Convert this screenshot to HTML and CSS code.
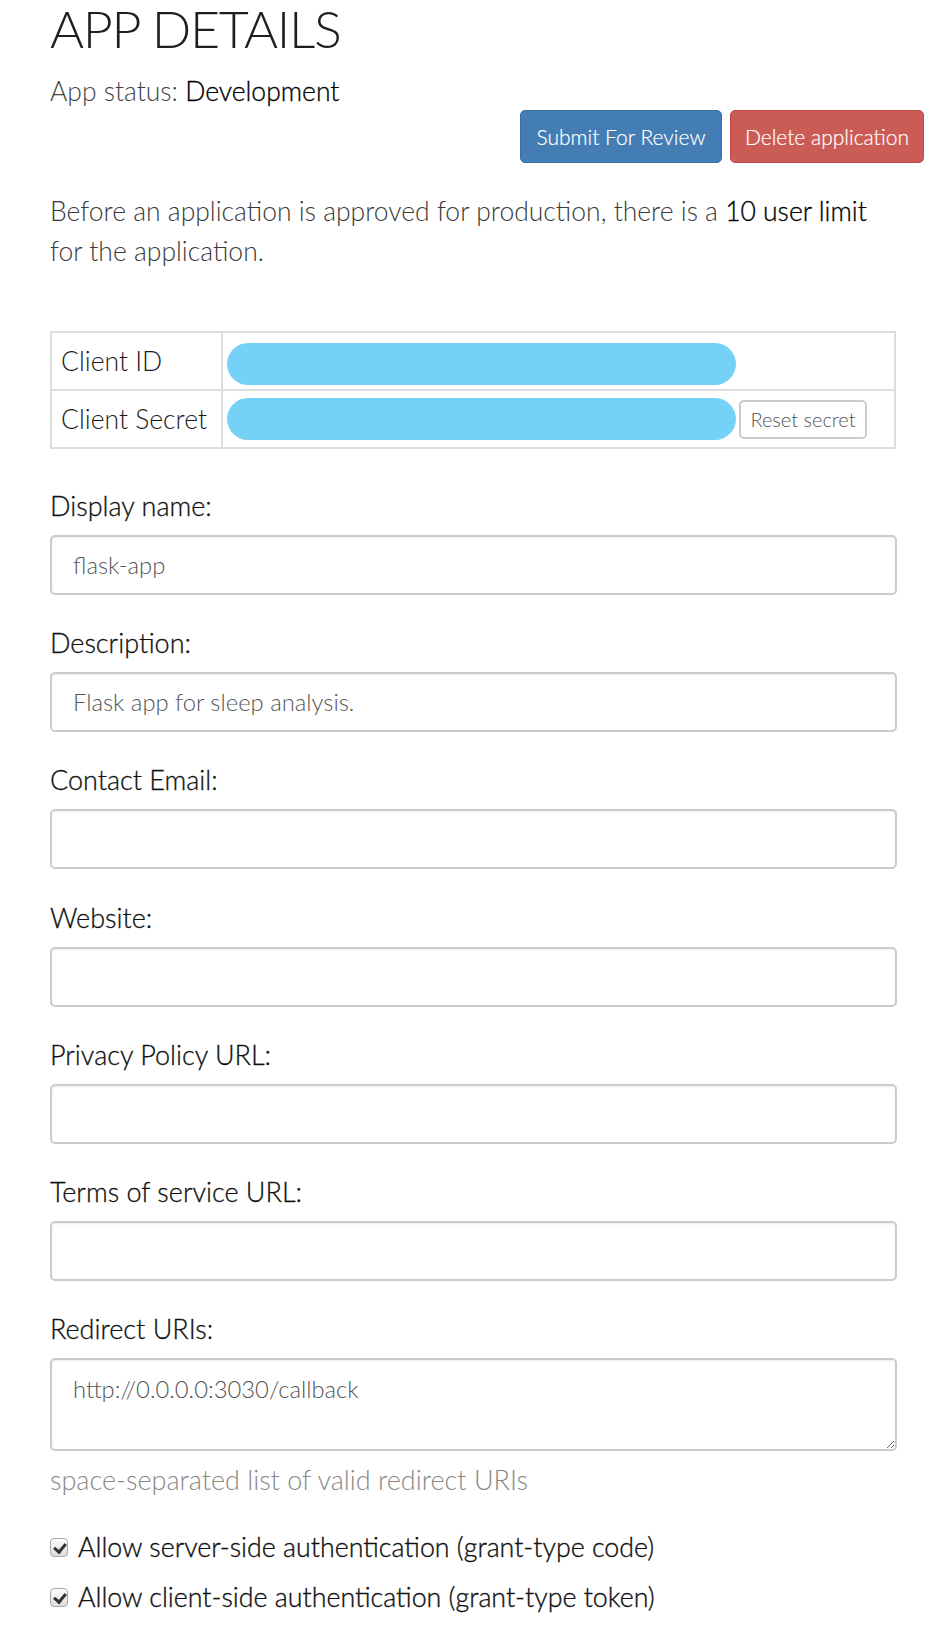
FILE: index.html
```html
<!DOCTYPE html>
<html lang="en">
<head>
<meta charset="utf-8">
<title>App Details</title>
<link rel="stylesheet" href="styles.css">
</head>
<body>
<div class="page">
  <h1 class="title">APP DETAILS</h1>
  <p class="status">App status: <strong>Development</strong></p>
  <div class="actions">
    <button class="btn btn-primary" type="button">Submit For Review</button>
    <button class="btn btn-danger" type="button">Delete application</button>
  </div>
  <p class="note">Before an application is approved for production, there is a <strong>10 user limit</strong> for the application.</p>

  <table class="creds">
    <tr>
      <th>Client ID</th>
      <td><span class="redact"></span></td>
    </tr>
    <tr>
      <th>Client Secret</th>
      <td class="secret-cell"><span class="redact redact-secret"></span><button class="btn-reset" type="button">Reset secret</button></td>
    </tr>
  </table>

  <form class="form">
    <div class="group">
      <label class="label" for="name">Display name:</label>
      <input class="control" id="name" type="text" value="flask-app">
    </div>
    <div class="group">
      <label class="label" for="desc">Description:</label>
      <input class="control" id="desc" type="text" value="Flask app for sleep analysis.">
    </div>
    <div class="group">
      <label class="label" for="email">Contact Email:</label>
      <input class="control" id="email" type="text">
    </div>
    <div class="group">
      <label class="label" for="site">Website:</label>
      <input class="control" id="site" type="text">
    </div>
    <div class="group">
      <label class="label" for="privacy">Privacy Policy URL:</label>
      <input class="control" id="privacy" type="text">
    </div>
    <div class="group">
      <label class="label" for="tos">Terms of service URL:</label>
      <input class="control" id="tos" type="text">
    </div>
    <div class="group group-last">
      <label class="label" for="redirect">Redirect URIs:</label>
      <textarea class="control area" id="redirect">http://0.0.0.0:3030/callback</textarea>
      <p class="help">space-separated list of valid redirect URIs</p>
    </div>
    <label class="check"><input type="checkbox" checked><span>Allow server-side authentication (grant-type code)</span></label>
    <label class="check"><input type="checkbox" checked><span>Allow client-side authentication (grant-type token)</span></label>
  </form>
</div>
</body>
</html>
```

FILE: styles.css
```css
* { box-sizing: border-box; }

html, body {
  margin: 0;
  padding: 0;
  background: #fff;
}

body {
  font-family: "Lato", "Liberation Sans", sans-serif;
  font-weight: 300;
  color: #3a3a3a;
}

.page {
  padding: 0 51px 0 50px;
}

.title {
  margin: 0;
  font-size: 52px;
  line-height: 57px;
  font-weight: 300;
  color: #1e1e1e;
  letter-spacing: -1.3px;
}

.status {
  margin: 16px 0 0;
  font-size: 26.5px;
  line-height: 36px;
  color: #444;
}

.status strong, .note strong {
  font-weight: 300;
  color: #000;
  -webkit-text-stroke: 0.3px #000;
}

.actions {
  display: flex;
  justify-content: flex-end;
  gap: 8px;
  margin: 1px -27px 0 0;
}

.btn {
  font-family: inherit;
  font-weight: 300;
  font-size: 21px;
  height: 53px;
  padding: 0 8px;
  border-radius: 5px;
  color: #fff;
  border: 1px solid transparent;
  cursor: pointer;
  white-space: nowrap;
  -webkit-text-stroke: 0.2px #fff;
}

.btn-primary {
  background: #437db4;
  border-color: #3a6fa3;
  width: 202px;
}

.btn-danger {
  background: #cb5c55;
  border-color: #c24b44;
  width: 194px;
}

.note {
  margin: 28px 0 0;
  font-size: 26.5px;
  line-height: 40px;
}

.creds {
  margin-top: 60px;
  width: 846px;
  border-collapse: collapse;
  border: 2px solid #ddd;
}

.creds th, .creds td {
  border: 2px solid #ddd;
  height: 58px;
  padding: 0;
  vertical-align: middle;
}

.creds th {
  width: 171px;
  text-align: left;
  font-weight: 300;
  font-size: 26.5px;
  color: #1a1a1a;
  padding-left: 9px;
}

.creds td {
  padding-left: 4px;
}

.secret-cell {
  white-space: nowrap;
}

.redact {
  display: inline-block;
  width: 509px;
  height: 42px;
  border-radius: 21px;
  background: #76d1f7;
  vertical-align: middle;
  margin-top: 6px;
}

.redact-secret {
  margin-top: 0;
}

.btn-reset {
  display: inline-block;
  vertical-align: middle;
  margin-left: 3px;
  width: 128px;
  height: 39px;
  font-family: inherit;
  font-weight: 300;
  font-size: 20px;
  color: #555;
  background: #fff;
  border: 2px solid #ccc;
  border-radius: 5px;
  padding: 0;
}

.form {
  margin-top: 39px;
}

.group {
  margin-bottom: 30.2px;
}

.label {
  display: block;
  font-size: 27px;
  line-height: 36px;
  font-weight: 300;
  color: #111;
  -webkit-text-stroke: 0.3px #111;
  margin-bottom: 11px;
}

.control {
  display: block;
  width: 847px;
  height: 60px;
  border: 2px solid #ccc;
  border-radius: 5px;
  box-shadow: inset 0 1px 2px rgba(0,0,0,0.08);
  padding: 0 21px;
  font-family: inherit;
  font-weight: 300;
  font-size: 23.8px;
  color: #555;
  background: #fff;
  outline: none;
}

.area {
  height: 93px;
  padding-top: 13px;
  resize: vertical;
  line-height: 32px;
}

.group-last {
  margin-bottom: 31px;
}

.help {
  margin: 11px 0 0;
  font-size: 27px;
  line-height: 36px;
  color: #888;
}

.check {
  display: flex;
  align-items: center;
  gap: 10px;
  font-size: 26.8px;
  line-height: 36px;
  font-weight: 300;
  color: #111;
  -webkit-text-stroke: 0.35px #111;
  margin-bottom: 14px;
}

.check input {
  appearance: none;
  -webkit-appearance: none;
  margin: 0;
  width: 18px;
  height: 19px;
  border: 1px solid #a9a9a9;
  border-radius: 4px;
  background: linear-gradient(#fdfdfd, #dcdcdc);
  position: relative;
  flex: none;
  -webkit-text-stroke: 0;
}

.check input:checked::after {
  content: "";
  position: absolute;
  left: 5px;
  top: 2px;
  width: 5px;
  height: 9px;
  border: solid #333;
  border-width: 0 3px 3px 0;
  transform: rotate(40deg);
}
```
